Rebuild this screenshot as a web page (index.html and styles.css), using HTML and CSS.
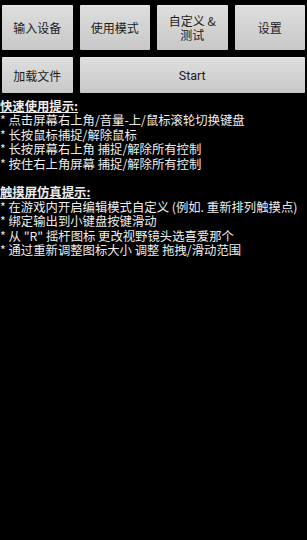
FILE: index.html
```html
<!DOCTYPE html>
<html>
<head>
<meta charset="utf-8">
<link rel="stylesheet" href="styles.css">
</head>
<body>
<div class="buttons">
  <div class="btn">输入设备</div>
  <div class="btn">使用模式</div>
  <div class="btn">自定义 &amp;<br>测试</div>
  <div class="btn">设置</div>
  <div class="btn btn-short">加载文件</div>
  <div class="btn btn-short btn-start">Start</div>
</div>
<div class="tips">
  <div class="heading">快速使用提示:</div>
  <div class="line">* 点击屏幕右上角/音量-上/鼠标滚轮切换键盘</div>
  <div class="line">* 长按鼠标捕捉/解除鼠标</div>
  <div class="line">* 长按屏幕右上角 捕捉/解除所有控制</div>
  <div class="line">* 按住右上角屏幕 捕捉/解除所有控制</div>
  <div class="line blank">&nbsp;</div>
  <div class="heading">触摸屏仿真提示:</div>
  <div class="line">* 在游戏内开启编辑模式自定义 (例如. 重新排列触摸点)</div>
  <div class="line">* 绑定输出到小键盘按键滑动</div>
  <div class="line">* 从 "R" 摇杆图标 更改视野镜头选喜爱那个</div>
  <div class="line">* 通过重新调整图标大小 调整 拖拽/滑动范围</div>
</div>
</body>
</html>
```
FILE: styles.css
```css
html, body {
  margin: 0;
  padding: 0;
  background: #000;
}
body {
  width: 307px;
  height: 540px;
  font-family: "Noto Sans CJK SC", "Noto Sans", sans-serif;
}
.buttons {
  display: grid;
  grid-template-columns: repeat(4, 1fr);
  grid-template-rows: 45px 36px;
  column-gap: 7px;
  row-gap: 7px;
  padding: 5px 2px 0 2px;
}
.btn {
  display: flex;
  align-items: center;
  justify-content: center;
  text-align: center;
  background: linear-gradient(#dedede, #c8c8c8);
  border-top: 1px solid #e9e9e9;
  border-radius: 1px;
  color: #1c1c1c;
  font-size: 12px;
  line-height: 14px;
}
.btn-start {
  grid-column: 2 / 5;
  font-family: "Roboto", "Noto Sans", sans-serif;
  font-size: 12.5px;
}
.tips {
  margin-top: 6px;
  color: #ededed;
  font-size: 12.35px;
  line-height: 14.4px;
  white-space: nowrap;
}
.heading {
  font-weight: bold;
  text-decoration: underline;
  text-underline-offset: 1px;
}
```
